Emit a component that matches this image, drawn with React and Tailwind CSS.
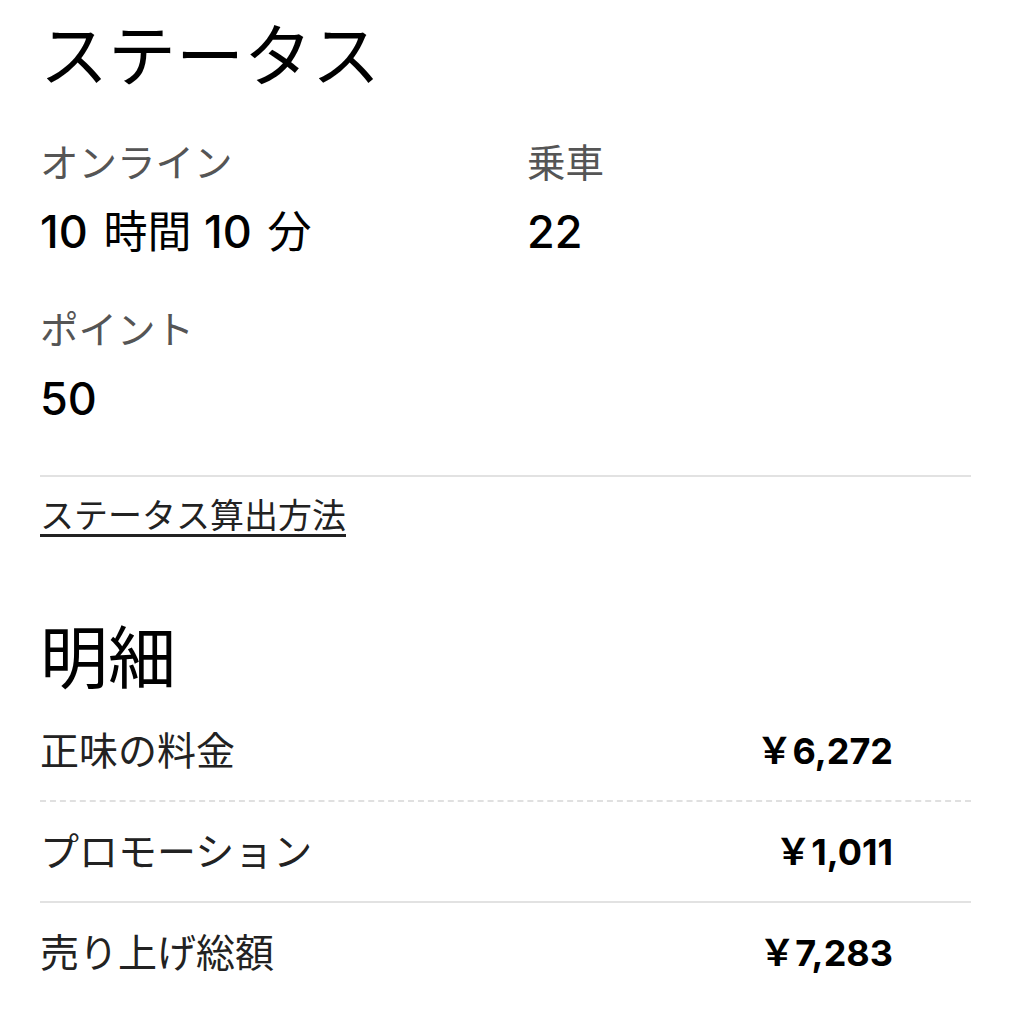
const font = { fontFamily: '"Noto Sans", "Noto Sans CJK JP", sans-serif' };
const numFont = { fontFamily: 'Inter, "Noto Sans CJK JP", sans-serif' };

function Num({ children }) {
  return <span className="font-medium">{children}</span>;
}

function Stat({ label, children }) {
  return (
    <div>
      <p className="text-[38.5px] leading-[48px] text-[#555]">{label}</p>
      <p className="mt-[22px] text-[45px] leading-[48px] text-black" style={numFont}>{children}</p>
    </div>
  );
}

function Row({ label, amount }) {
  return (
    <div className="flex items-center justify-between pr-[78px] h-[99px]">
      <span className="text-[39px] text-[#222]">{label}</span>
      <span className="text-[36px] font-bold text-black" style={numFont}>{amount}</span>
    </div>
  );
}

export default function App() {
  return (
    <div className="bg-white w-[1011px] h-[1024px] px-10 overflow-hidden" style={font}>
      {/* Status */}
      <h1 className="text-[68px] leading-[110px] text-black">ステータス</h1>
      <div className="grid grid-cols-[487px_1fr] gap-y-[49px] mt-[28px]">
        <Stat label="オンライン">
          <Num>10</Num> <span className="text-[44px] ml-[3px]">時間</span> <Num>10</Num> <span className="text-[44px] ml-[3px]">分</span>
        </Stat>
        <Stat label="乗車"><Num>22</Num></Stat>
        <Stat label="ポイント"><Num>50</Num></Stat>
      </div>
      <div className="border-t-2 border-[#e2e2e2] mt-[52px]" />
      <a className="block mt-[16px] text-[34px] leading-[44px] text-[#222] underline underline-offset-[6px]">ステータス算出方法</a>

      {/* Breakdown */}
      <h2 className="mt-[78px] text-[68px] leading-[84px] text-black">明細</h2>
      <div className="mt-[2px]">
        <Row label="正味の料金" amount="￥6,272" />
        <div className="border-t-2 border-dashed border-[#e0e0e0]" />
        <Row label="プロモーション" amount="￥1,011" />
        <div className="border-t-2 border-[#e2e2e2]" />
        <Row label="売り上げ総額" amount="￥7,283" />
      </div>
    </div>
  );
}
